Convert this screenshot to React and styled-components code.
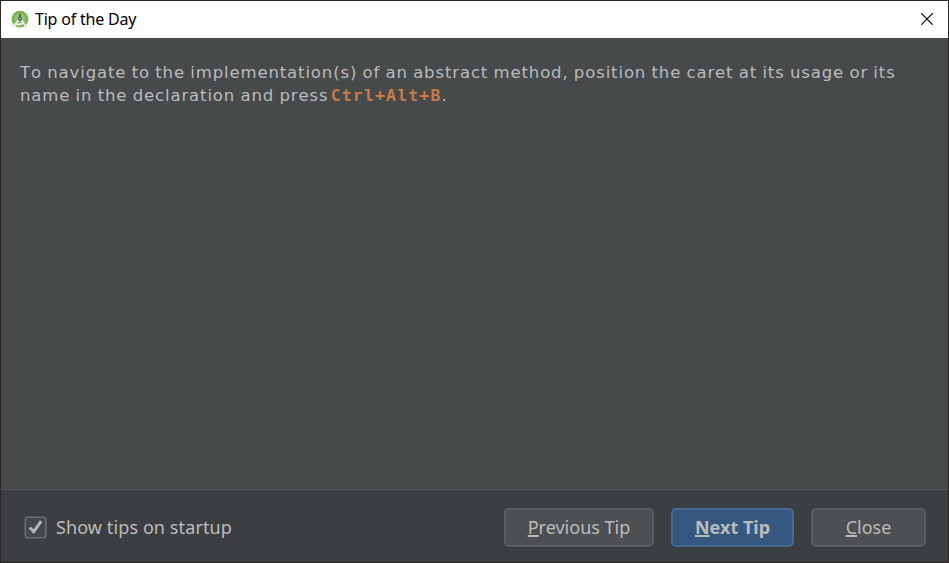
import React from "react";
import styled, { createGlobalStyle } from "styled-components";

const GlobalStyle = createGlobalStyle`
  * { box-sizing: border-box; }
  body { margin: 0; background: #3c3f41; overflow: hidden; }
`;

const Window = styled.div`
  width: 949px;
  height: 563px;
  display: flex;
  flex-direction: column;
  border: 1px solid #2b2729;
  background: #3c3f41;
  font-family: "Noto Sans", sans-serif;
`;

const TitleBar = styled.header`
  height: 37px;
  flex: none;
  display: flex;
  align-items: center;
  padding: 0 15px 0 10px;
  background: #fff;
`;

const Title = styled.h1`
  margin: 0 auto 1px 6px;
  font-size: 16px;
  font-weight: 400;
  line-height: 20px;
  letter-spacing: -0.2px;
  color: #000;
`;

const IconButton = styled.button`
  display: flex;
  margin-bottom: 1px;
  padding: 0;
  border: 0;
  background: none;
`;

const TipPane = styled.main`
  flex: 1;
  padding: 23px 19px;
  background: #464a4b;
  border-bottom: 1px solid #515556;
`;

const TipText = styled.p`
  margin: 0;
  font-family: "DejaVu Sans", sans-serif;
  font-size: 16.5px;
  font-kerning: none;
  line-height: 23px;
  letter-spacing: 0.87px;
  word-spacing: -0.8px;
  white-space: nowrap;
  color: #bbbbbb;
`;

const Shortcut = styled.kbd`
  margin-left: -3px;
  font-family: "DejaVu Sans Mono", monospace;
  font-size: 16.5px;
  font-weight: 700;
  letter-spacing: 1.15px;
  color: #cc7a43;
`;

const Footer = styled.footer`
  height: 72px;
  flex: none;
  display: flex;
  align-items: center;
  padding: 2px 22px 0 23px;
`;

const CheckLabel = styled.label`
  display: flex;
  align-items: center;
  gap: 9px;
  margin-right: auto;
  font-size: 18px;
  line-height: 24px;
  letter-spacing: 0.1px;
  color: #bbbbbb;
`;

const Actions = styled.div`
  display: flex;
  gap: 17px;
`;

const Button = styled.button`
  width: ${(p) => p.$width}px;
  height: 39px;
  padding: 0;
  border: 2px solid ${(p) => (p.$primary ? "#436a90" : "#5a5e5f")};
  border-radius: 5px;
  background: ${(p) => (p.$primary ? "#365880" : "#4c5052")};
  box-shadow: 0 1px 1px #35383a;
  font-family: "Noto Sans", sans-serif;
  font-size: 18px;
  font-weight: ${(p) => (p.$primary ? 700 : 400)};
  line-height: 24px;
  color: #bbbbbb;
`;

const Mnemonic = styled.span`
  text-decoration: underline;
  text-decoration-thickness: 2px;
  text-underline-offset: 1px;
  text-decoration-skip-ink: none;
`;

const StudioIcon = () => (
  <svg width="18" height="20" viewBox="0 0 18 20">
    <circle cx="9" cy="9.2" r="8.4" fill="#7ab552" />
    <circle cx="9" cy="9.2" r="5.8" fill="#8fc269" />
    <path d="M7.4 10L4.5 14.8 2.2 18M10.6 10l2.9 4.8 2.3 3.2" fill="none" stroke="#e9eeea" strokeWidth="1.8" />
    <path d="M3.8 13.2c2.6 1.9 6 1.6 8.4-.6" fill="none" stroke="#f3f6f2" strokeWidth="1.5" />
    <path d="M9 4v3" stroke="#56635b" strokeWidth="1.8" />
    <path d="M6.8 9.8l.6-2.5 1.6-1 1.6 1 .6 2.5-2.2 1.5z" fill="#566064" />
    <circle cx="9" cy="8.6" r=".8" fill="#b8cdb0" />
  </svg>
);

const CloseIcon = () => (
  <svg width="12" height="12" viewBox="0 0 12 12">
    <path d="M.3.3l11.4 11.4M11.7.3L.3 11.7" stroke="#000" strokeWidth="1.2" />
  </svg>
);

const CheckIcon = () => (
  <svg width="23" height="23" viewBox="0 0 23 23">
    <rect x="1.25" y="1.25" width="20.5" height="20.5" rx="2.5" fill="#43494a" stroke="#6b6e6e" strokeWidth="1.6" />
    <path d="M5.8 11.5l3.9 4.2L17.2 5.2" fill="none" stroke="#b4b4b4" strokeWidth="3" />
  </svg>
);

export default function App() {
  return (
    <>
      <GlobalStyle />
      <Window>
        <TitleBar>
          <StudioIcon />
          <Title>Tip of the Day</Title>
          <IconButton aria-label="Close window"><CloseIcon /></IconButton>
        </TitleBar>
        <TipPane>
          <TipText>
            To navigate to the implementation(s) of an abstract method, position the caret at its usage or its
            <br />
            name in the declaration and press <Shortcut>Ctrl+Alt+B</Shortcut>.
          </TipText>
        </TipPane>
        <Footer>
          <CheckLabel><CheckIcon />Show tips on startup</CheckLabel>
          <Actions>
            <Button $width={150}><Mnemonic>P</Mnemonic>revious Tip</Button>
            <Button $width={123} $primary><Mnemonic>N</Mnemonic>ext Tip</Button>
            <Button $width={115}><Mnemonic>C</Mnemonic>lose</Button>
          </Actions>
        </Footer>
      </Window>
    </>
  );
}
